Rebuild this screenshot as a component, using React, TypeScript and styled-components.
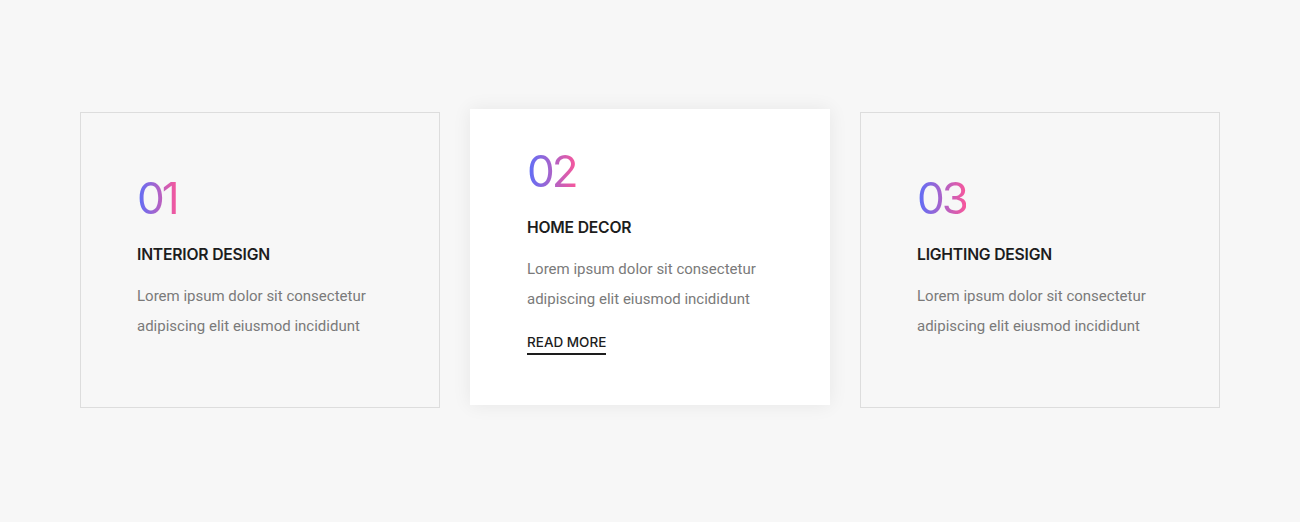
import React from "react";
import styled, { createGlobalStyle, css } from "styled-components";

const Global = createGlobalStyle`
  html, body { margin: 0; padding: 0; background: #f7f7f7; }
  * { box-sizing: border-box; }
`;

const Page = styled.section`
  width: 100%;
  min-height: 522px;
  background: #f7f7f7;
  display: flex;
  justify-content: center;
  padding-top: 112px;
`;

const Row = styled.div`
  display: grid;
  grid-template-columns: repeat(3, 360px);
  gap: 30px;
  align-items: start;
`;

const Card = styled.div<{ $active?: boolean }>`
  height: 296px;
  display: flex;
  flex-direction: column;
  justify-content: center;
  padding: 0 40px 8px 56px;
  border: 1px solid #dddddd;
  background: transparent;
  ${(p) =>
    p.$active &&
    css`
      background: #ffffff;
      border-color: #ffffff;
      transform: translateY(-3px);
      box-shadow: 0 0 18px rgba(0, 0, 0, 0.07);
    `}
`;

const Number = styled.span`
  align-self: flex-start;
  font-family: "Inter", "Noto Sans", sans-serif;
  font-weight: 400;
  font-size: 44px;
  line-height: 54px;
  letter-spacing: -3px;
  background: linear-gradient(to right, #5a6ffa, #f8579b);
  -webkit-background-clip: text;
  background-clip: text;
  color: transparent;
  margin-bottom: 18px;
`;

const Title = styled.h3`
  margin: 0 0 14px;
  font-family: "Inter", "Noto Sans", sans-serif;
  font-weight: 600;
  font-size: 15.7px;
  letter-spacing: -0.2px;
  line-height: 24px;
  color: #1d1d1d;
  text-transform: uppercase;
`;

const Text = styled.p`
  margin: 0;
  font-family: "Roboto", "Liberation Sans", sans-serif;
  font-size: 15px;
  line-height: 30px;
  color: #7a7a7a;
`;

const More = styled.a`
  align-self: flex-start;
  margin: 18px 0 8px;
  font-family: "Inter", "Noto Sans", sans-serif;
  font-weight: 500;
  font-size: 13.5px;
  line-height: 20px;
  color: #1d1d1d;
  text-decoration: none;
  text-transform: uppercase;
  padding-bottom: 1px;
  border-bottom: 2px solid #1d1d1d;
`;

const items = [
  { n: "01", t: "Interior Design" },
  { n: "02", t: "Home Decor", active: true },
  { n: "03", t: "Lighting Design" },
];

export default function App() {
  return (
    <>
      <Global />
      <Page>
        <Row>
          {items.map((it) => (
            <Card key={it.n} $active={it.active}>
              <Number>{it.n}</Number>
              <Title>{it.t}</Title>
              <Text>
                Lorem ipsum dolor sit consectetur
                <br />
                adipiscing elit eiusmod incididunt
              </Text>
              {it.active && <More href="#">Read More</More>}
            </Card>
          ))}
        </Row>
      </Page>
    </>
  );
}
